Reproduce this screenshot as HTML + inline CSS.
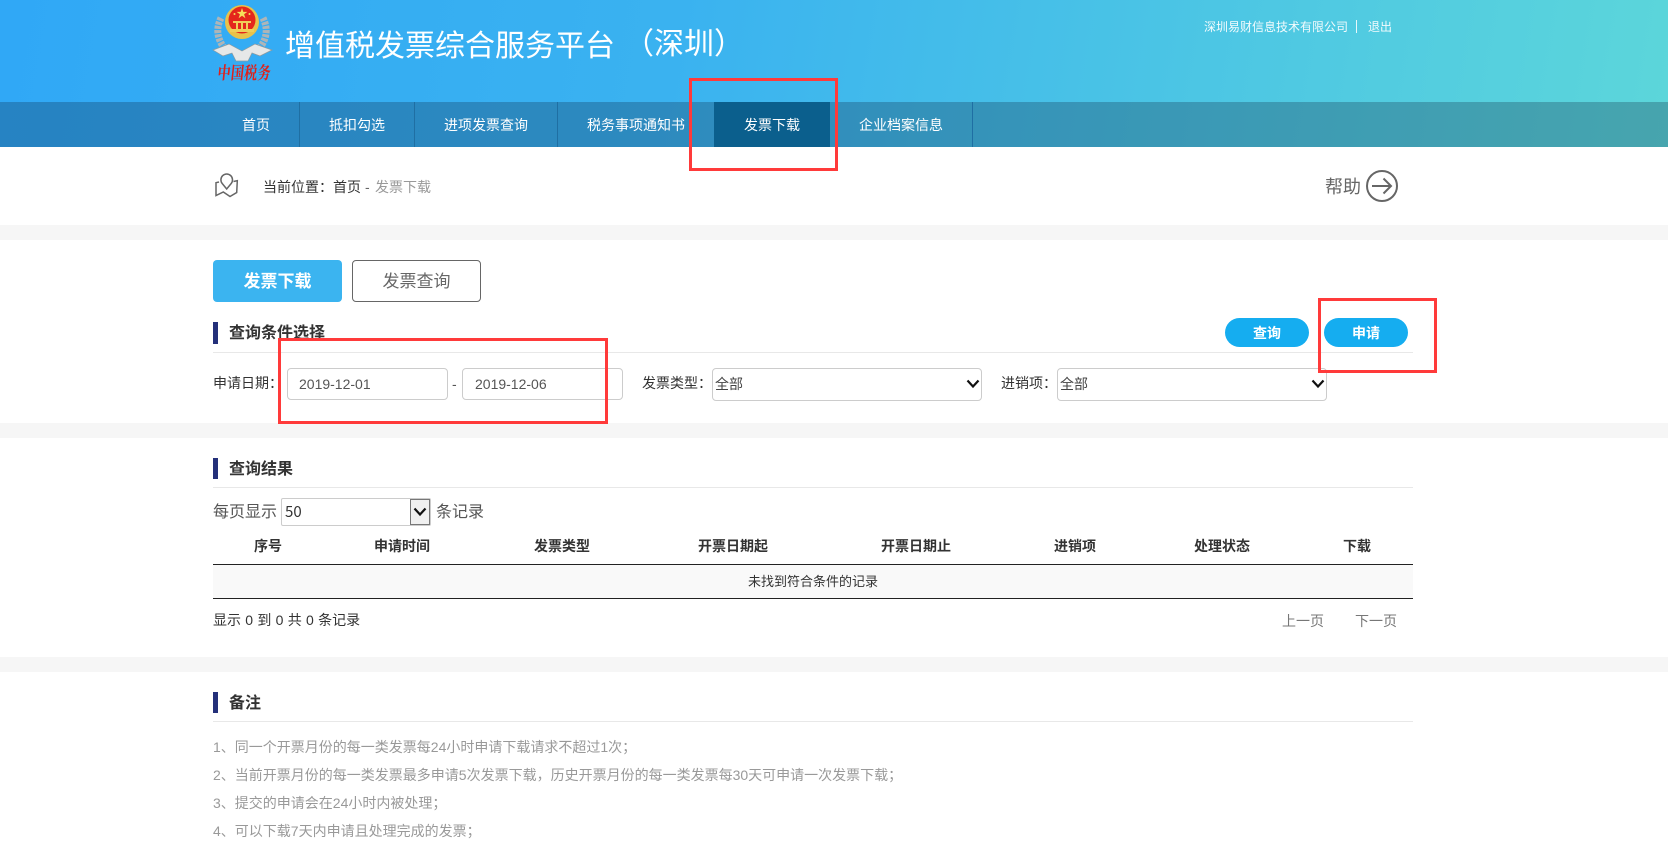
<!DOCTYPE html>
<html lang="zh-CN">
<head>
<meta charset="utf-8">
<title>发票下载</title>
<style>
html,body{margin:0;padding:0;background:#fff;}
body{position:relative;width:1668px;height:842px;overflow:hidden;font-family:"Liberation Sans","Noto Sans CJK SC",sans-serif;color:#333;}
.a{position:absolute;white-space:nowrap;}
.t{position:absolute;white-space:nowrap;font-size:14px;height:20px;line-height:20px;}
.c{transform:translateX(-50%);}
.band{position:absolute;left:0;width:1668px;height:15px;background:#f6f6f6;}
.bar{position:absolute;left:213px;width:5px;background:#24307a;}
.hr{position:absolute;left:213px;width:1200px;height:1px;background:#e8e8e8;}
.h3{position:absolute;left:229px;font-size:16px;font-weight:bold;color:#333;height:24px;line-height:24px;white-space:nowrap;}
.nav{position:absolute;top:102px;height:45px;line-height:46px;text-align:center;color:#fff;font-size:14px;border-right:1px solid #1f6fa3;box-sizing:border-box;}
.inp{position:absolute;top:368px;height:32px;width:161px;box-sizing:border-box;border:1px solid #ccc;border-radius:4px;background:#fff;padding-left:11px;line-height:30px;font-size:14px;color:#555;}
.sel{position:absolute;top:368px;height:33px;box-sizing:border-box;border:1px solid #ccc;border-radius:4px;background:#fff;font-size:14px;line-height:30px;color:#444;padding-left:2px;}
.pill{position:absolute;top:318px;width:84px;height:29px;border-radius:15px;background:#15adf0;color:#fff;font-size:14px;font-weight:bold;line-height:31px;text-align:center;}
.red{position:absolute;box-sizing:border-box;border:3px solid #ff3a3a;}
.th{position:absolute;top:536px;font-size:14px;font-weight:bold;line-height:20px;color:#333;transform:translateX(-50%);white-space:nowrap;}
.li{position:absolute;left:213px;font-size:14px;line-height:20px;color:#999;white-space:nowrap;}
</style>
</head>
<body>
<!-- header -->
<div class="a" style="left:0;top:0;width:1668px;height:147px;background:linear-gradient(100deg,#30a8f6 0%,#3ab2f0 40%,#4cc6e4 72%,#5cd6da 100%);"></div>
<div class="a" style="left:0;top:102px;width:1668px;height:45px;background:rgba(8,18,42,.25);"></div>

<svg class="a" style="left:210px;top:2px" width="66" height="84" viewBox="0 0 66 84">
  <path d="M11 16 Q3 32 15 47 M53 16 Q61 32 49 47" fill="none" stroke="#aeb5b8" stroke-width="7" stroke-dasharray="3 1.2"/>
  <path d="M3 48 L19 42 L32 49 L45 42 L62 48 L50 54 L42 51 L38 59 L26 59 L22 51 L13 54 Z" fill="#e6e8e8" stroke="#8f9a9e" stroke-width=".7"/>
  <circle cx="32" cy="20" r="17" fill="#e9c24a"/>
  <circle cx="32" cy="18" r="13.5" fill="#e4261c"/>
  <path d="M32 6 l1.3 3.9 4.1 0 -3.3 2.4 1.3 3.9 -3.4 -2.4 -3.4 2.4 1.3 -3.9 -3.3 -2.4 4.1 0z" fill="#f6e05a"/>
  <circle cx="24.5" cy="12" r="1" fill="#f6e05a"/><circle cx="39.5" cy="12" r="1" fill="#f6e05a"/>
  <rect x="23" y="19" width="18" height="2" fill="#f0cf58"/>
  <rect x="20" y="27" width="24" height="3" fill="#f0cf58"/>
  <path d="M26 21 h2 v6 h-2z M31 21 h2 v6 h-2z M36 21 h2 v6 h-2z" fill="#f0cf58"/>
  <text x="0" y="0" font-family="'Noto Serif CJK SC',serif" font-size="13" font-weight="bold" fill="#e0201a" textLength="53" lengthAdjust="spacing" transform="translate(7,77) scale(1,1.35) skewX(-8)">中国税务</text>
</svg>

<div class="a" style="left:285px;top:26px;font-size:30px;line-height:42px;color:#fff;height:42px;">增值税发票综合服务平台</div>
<div class="a" style="left:624px;top:24px;font-size:30px;line-height:42px;color:#fff;height:42px;">&#xFF08;深圳&#xFF09;</div>
<div class="t" style="left:1204px;top:17px;font-size:12px;color:#f2fbfd;">深圳易财信息技术有限公司</div>
<div class="a" style="left:1356px;top:20px;width:1px;height:13px;background:#e8f8fb;"></div>
<div class="t" style="left:1368px;top:17px;font-size:12px;color:#f2fbfd;">退出</div>

<!-- nav -->
<div class="nav" style="left:213px;width:87px;">首页</div>
<div class="nav" style="left:300px;width:115px;">抵扣勾选</div>
<div class="nav" style="left:415px;width:143px;">进项发票查询</div>
<div class="nav" style="left:558px;width:156px;border-right:0;">税务事项通知书</div>
<div class="nav" style="left:714px;width:116px;background:#0b5f8d;border-right:0;">发票下载</div>
<div class="nav" style="left:830px;width:143px;">企业档案信息</div>

<!-- breadcrumb -->
<svg class="a" style="left:213px;top:172px" width="26" height="26" viewBox="0 0 26 26" fill="none" stroke="#666" stroke-width="1.5">
  <path d="M6 10 L3 10.7 L3 23.5 L10.3 20 L17 24.5 L23.7 20.5 L24.3 8.7 L20.5 9.5"/>
  <path d="M13.7 17 L9.2 11.5 A5.8 5.8 0 1 1 18.2 11.5 Z"/>
</svg>
<div class="t" style="left:263px;top:177px;">当前位置&#xFF1A;</div>
<div class="t" style="left:333px;top:177px;">首页</div>
<div class="t" style="left:365px;top:177px;color:#666;">-</div>
<div class="t" style="left:375px;top:177px;color:#999;">发票下载</div>
<div class="t" style="left:1325px;top:175px;font-size:18px;height:24px;line-height:24px;color:#666;">帮助</div>
<svg class="a" style="left:1365px;top:169px" width="34" height="34" viewBox="0 0 34 34" fill="none" stroke="#666" stroke-width="2">
  <circle cx="17" cy="17" r="15"/>
  <path d="M7 17 H26 M18.5 9.5 L26 17 L18.5 24.5"/>
</svg>

<div class="band" style="top:225px;"></div>

<!-- tabs -->
<div class="a" style="left:213px;top:260px;width:129px;height:42px;background:#3bb4f0;border-radius:4px;color:#fff;font-size:17px;font-weight:bold;line-height:43px;text-align:center;">发票下载</div>
<div class="a" style="left:352px;top:260px;width:129px;height:42px;box-sizing:border-box;border:1px solid #666;border-radius:4px;color:#666;font-size:17px;line-height:41px;text-align:center;">发票查询</div>

<div class="bar" style="top:322px;height:22px;"></div>
<div class="h3" style="top:322px;">查询条件选择</div>
<div class="hr" style="top:352px;"></div>
<div class="pill" style="left:1225px;">查询</div>
<div class="pill" style="left:1324px;">申请</div>

<div class="t" style="left:213px;top:373px;">申请日期&#xFF1A;</div>
<div class="inp" style="left:287px;">2019-12-01</div>
<div class="t" style="left:452px;top:374px;color:#555;">-</div>
<div class="inp" style="left:462px;padding-left:12px;">2019-12-06</div>
<div class="t" style="left:642px;top:373px;">发票类型&#xFF1A;</div>
<div class="sel" style="left:712px;width:270px;">全部
  <svg class="a" style="right:1px;top:9px" width="14" height="12" viewBox="0 0 14 12"><path d="M1.5 2.5 L7 8.5 L12.5 2.5" fill="none" stroke="#111" stroke-width="2.2"/></svg>
</div>
<div class="t" style="left:1001px;top:373px;">进销项&#xFF1A;</div>
<div class="sel" style="left:1057px;width:270px;">全部
  <svg class="a" style="right:1px;top:9px" width="14" height="12" viewBox="0 0 14 12"><path d="M1.5 2.5 L7 8.5 L12.5 2.5" fill="none" stroke="#111" stroke-width="2.2"/></svg>
</div>

<div class="band" style="top:423px;"></div>

<!-- results -->
<div class="bar" style="top:458px;height:21px;"></div>
<div class="h3" style="top:458px;">查询结果</div>
<div class="hr" style="top:487px;"></div>
<div class="t" style="left:213px;top:501px;font-size:16px;height:24px;line-height:24px;color:#555;">每页显示</div>
<div class="a" style="left:281px;top:498px;width:150px;height:28px;box-sizing:border-box;border:1px solid #ccc;border-radius:2px;background:#fff;font-family:'Noto Sans CJK SC',sans-serif;font-size:15px;line-height:26px;padding-left:3px;color:#333;">50
  <div class="a" style="right:0;top:0;width:20px;height:26px;box-sizing:border-box;border:1px solid #777;background:#f0f0f0;"></div>
  <svg class="a" style="right:3px;top:7px" width="14" height="12" viewBox="0 0 14 12"><path d="M1.5 2.5 L7 8.5 L12.5 2.5" fill="none" stroke="#111" stroke-width="2.2"/></svg>
</div>
<div class="t" style="left:436px;top:501px;font-size:16px;height:24px;line-height:24px;color:#555;">条记录</div>

<div class="th" style="left:268px;">序号</div>
<div class="th" style="left:402px;">申请时间</div>
<div class="th" style="left:562px;">发票类型</div>
<div class="th" style="left:733px;">开票日期起</div>
<div class="th" style="left:916px;">开票日期止</div>
<div class="th" style="left:1075px;">进销项</div>
<div class="th" style="left:1222px;">处理状态</div>
<div class="th" style="left:1357px;">下载</div>
<div class="a" style="left:213px;top:565px;width:1200px;height:33px;background:#f9f9f9;"></div>
<div class="a" style="left:213px;top:564px;width:1200px;height:1px;background:#222;"></div>
<div class="a" style="left:213px;top:598px;width:1200px;height:1px;background:#222;"></div>
<div class="t c" style="left:813px;top:572px;font-size:13px;">未找到符合条件的记录</div>
<div class="t" style="left:213px;top:610px;word-spacing:.4px;">显示 0 到 0 共 0 条记录</div>
<div class="t" style="left:1282px;top:611px;color:#777;">上一页</div>
<div class="t" style="left:1355px;top:611px;color:#777;">下一页</div>

<div class="band" style="top:657px;"></div>

<!-- notes -->
<div class="bar" style="top:692px;height:21px;"></div>
<div class="h3" style="top:692px;">备注</div>
<div class="hr" style="top:721px;"></div>
<div class="li" style="top:737px;">1、同一个开票月份的每一类发票每24小时申请下载请求不超过1次&#xFF1B;</div>
<div class="li" style="top:765px;">2、当前开票月份的每一类发票最多申请5次发票下载&#xFF0C;历史开票月份的每一类发票每30天可申请一次发票下载&#xFF1B;</div>
<div class="li" style="top:793px;">3、提交的申请会在24小时内被处理&#xFF1B;</div>
<div class="li" style="top:821px;">4、可以下载7天内申请且处理完成的发票&#xFF1B;</div>

<!-- annotation boxes -->
<div class="red" style="left:689px;top:78px;width:149px;height:93px;"></div>
<div class="red" style="left:278px;top:338px;width:330px;height:86px;"></div>
<div class="red" style="left:1318px;top:298px;width:119px;height:75px;"></div>
</body>
</html>
